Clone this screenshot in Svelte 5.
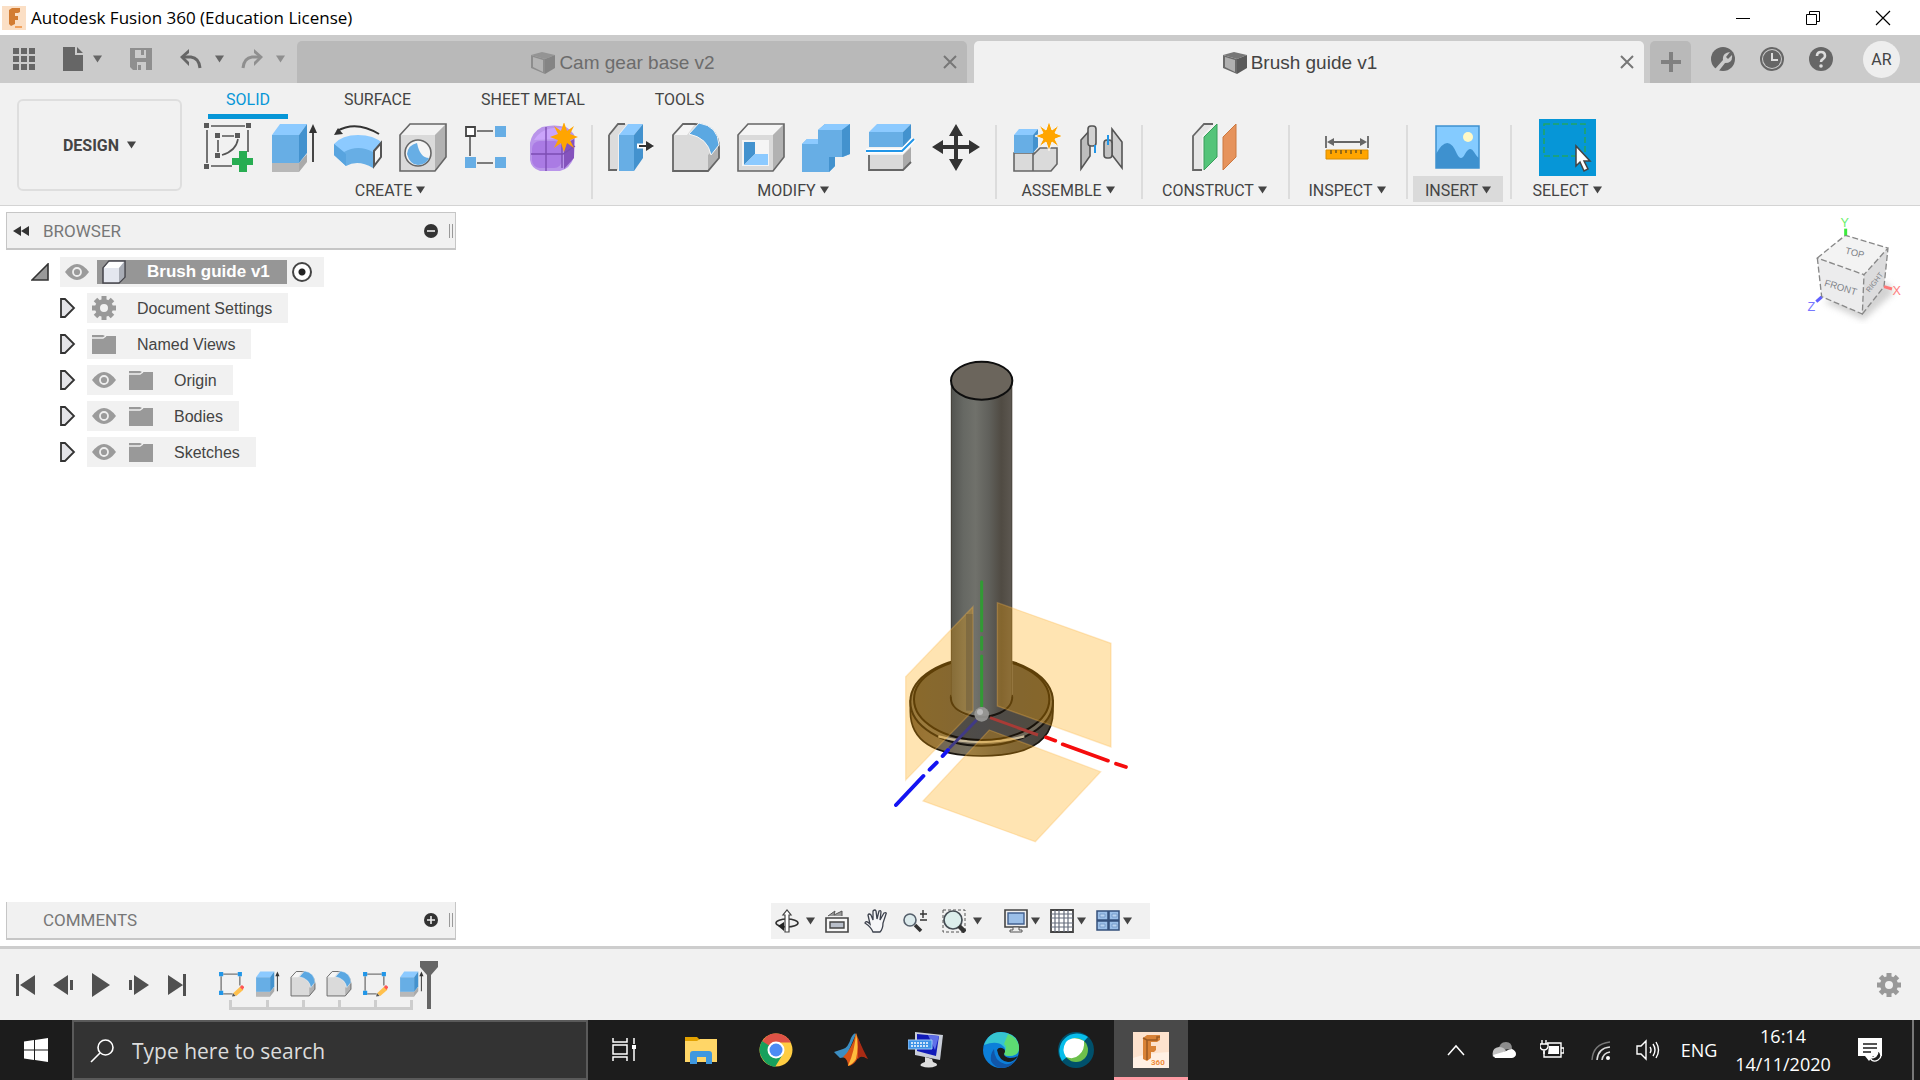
<script>
  const fileTools = ['grid', 'file', 'save', 'undo', 'redo'];
  const tabs = [
    { title: 'Cam gear base v2', active: false },
    { title: 'Brush guide v1', active: true }
  ];
  const modes = ['SOLID', 'SURFACE', 'SHEET METAL', 'TOOLS'];
  const groups = [
    { label: 'CREATE', icons: ['sketch', 'extrude', 'revolve', 'hole', 'pattern', 'form'] },
    { label: 'MODIFY', icons: ['presspull', 'fillet', 'shell', 'combine', 'split', 'move'] },
    { label: 'ASSEMBLE', icons: ['component', 'joint'] },
    { label: 'CONSTRUCT', icons: ['plane'] },
    { label: 'INSPECT', icons: ['measure'] },
    { label: 'INSERT', icons: ['picture'] },
    { label: 'SELECT', icons: ['select'] }
  ];
  const tree = [
    { label: 'Document Settings', icon: 'gear', eye: false },
    { label: 'Named Views', icon: 'folder', eye: false },
    { label: 'Origin', icon: 'folder', eye: true },
    { label: 'Bodies', icon: 'folder', eye: true },
    { label: 'Sketches', icon: 'folder', eye: true }
  ];
  const navTools = [
    { icon: 'orbit', menu: true, wide: true },
    { icon: 'look', menu: false },
    { icon: 'pan', menu: false },
    { icon: 'zoom', menu: false },
    { icon: 'fit', menu: true, wide: true, last: true },
    { icon: 'display', menu: true },
    { icon: 'gridsnap', menu: true },
    { icon: 'views', menu: true }
  ];
  const playback = ['first', 'prev', 'play', 'next', 'last'];
  const features = ['tsketch', 'extrude', 'fillet', 'fillet', 'tsketch', 'extrude'];
  const apps = ['taskview', 'explorer', 'chrome', 'matlab', 'keyboard', 'edge', 'webex', 'fusion'];
  const teeth = [0, 45, 90, 135, 180, 225, 270, 315];
  const star = '0,-15 3,-6 10,-11 6,-3 14,0 6,3 10,11 3,6 0,15 -3,6 -10,11 -6,3 -14,0 -6,-3 -10,-11 -3,-6';
</script>

{#snippet caret()}
  <svg class="caret" viewBox="0 0 10 8" width="9" height="8" aria-hidden="true"><path d="M0 0h10L5 8z" fill="currentColor" /></svg>
{/snippet}

{#snippet ribbonIcon(name, size)}
  <svg viewBox="0 0 50 50" width={size} height={size} aria-hidden="true">
    {#if name === 'sketch'}
      <path d="M8 3h34M45 7v22M4 7v33M8 43h21M19 13h12M15 17v12M35 16q-2 12-16 16" fill="none" stroke="#555" stroke-width="1.6" />
      <path d="M1 0h5v5H1zM43 0h5v5h-5zM1 41h5v5H1zM12 10h5v5h-5zM32 10h5v5h-5zM12 30h5v5h-5z" fill="#5a5a5a" />
      <path d="M36 28h8v7h7v7h-7v7h-8v-7h-7v-7h7z" fill="#28ad52" />
    {:else if name === 'extrude'}
      <path d="M4 40h27l8-9v8l-8 10H4z" fill="#aaa" /><path d="M4 40h27v9H4z" fill="#b8b8b8" />
      <path d="M4 12 12 1h27l-8 11z" fill="#8ccaff" /><path d="M4 12h27v28H4z" fill="#67aee5" /><path d="m31 12 8-11v29l-8 10z" fill="#4392ce" />
      <path d="M45 39V8" stroke="#333" stroke-width="1.8" /><path d="m45 1 4 9h-8z" fill="#333" />
    {:else if name === 'revolve'}
      <path d="M4 8q19-11 42 3" fill="none" stroke="#333" stroke-width="2" /><path d="m1 12 4-7 5 6z" fill="#333" />
      <path d="M1 21q8-9 24-9t24 8l-7 12q-17-9-31 0z" fill="#8ccaff" />
      <path d="M1 21 11 29q14-8 29 0v16q-15-9-27-2L1 32z" fill="#67aee5" />
      <path d="M1 21v11l12 11V31z" fill="#58a4df" />
      <path d="m41 28 7-8v14l-7 9z" fill="#f5f5f5" stroke="#555" stroke-width="2" />
    {:else if name === 'hole'}
      <path d="M2 12 12 1h36v33L37 48H2z" fill="#dadada" /><path d="M2 12 12 1h36L37 12z" fill="#f2f2f2" /><path d="M37 12 48 1v33L37 48z" fill="#b2b2b2" />
      <path d="M2 12 12 1h36v33L37 48H2z" fill="none" stroke="#666" stroke-width="1.6" />
      <circle cx="20" cy="30" r="13" fill="#f5f5f5" stroke="#666" stroke-width="1.6" /><path d="M19 20q3 15 12 15-3 7-11 7T9 31q1-9 10-11z" fill="#67aee5" />
    {:else if name === 'pattern'}
      <path d="M14 8h16M7 14v19M14 40h16" stroke="#555" stroke-width="1.6" /><path d="M3 4h9v9H3z" fill="#fff" stroke="#444" stroke-width="1.8" />
      <path d="M32 3h11v11H32zM32 34h11v11H32zM2 34h11v11H2z" fill="#67aee5" />
    {:else if name === 'form'}
      <path d="M2 20Q4 9 14 4q12-3 24 0 10 6 9 14l-1 16q-4 12-14 14H12Q3 45 2 37z" fill="#b995ea" />
      <path d="m36 22 10-6v19l-10 11z" fill="#8553bd" /><path d="M6 17Q15 3 34 5l-4 11z" fill="#caa4fb" />
      <rect x="4" y="18" width="30" height="27" rx="8" fill="#aa7be4" /><path d="M18 4v44M3 31h32l12-8M34 14v31" fill="none" stroke="#7c4eb3" stroke-width="1.4" />
      <polygon points={star} transform="translate(36 14)" fill="#ffa500" />
    {:else if name === 'presspull'}
      <path d="M3 12 12 1h9L12 12v35H3z" fill="#dcdcdc" /><path d="M3 12 12 1h7M3 12v35h8" fill="none" stroke="#666" stroke-width="1.8" />
      <path d="M13 12 22 1h15l-9 11z" fill="#8ccaff" /><path d="M13 12h15v36H13z" fill="#67aee5" /><path d="m28 12 9-11v34l-9 13z" fill="#4392ce" />
      <path d="M31 23h16" stroke="#fff" stroke-width="5" /><path d="M33 23h10" stroke="#333" stroke-width="2" /><path d="m40 18 8 5-8 5z" fill="#333" />
    {:else if name === 'fillet'}
      <path d="M2 12 12 1h12q24 3 24 24v10L37 48H2z" fill="#dadada" /><path d="M2 12 12 1h12L16 12z" fill="#f5f5f5" /><path d="m37 32 11-10v13L37 48z" fill="#b2b2b2" />
      <path d="M2 12 12 1h12q24 3 24 24v10L37 48H2z" fill="none" stroke="#666" stroke-width="1.8" />
      <path d="M18 11 28 0q19 3 20 22l-8 10Q37 15 18 11z" fill="#5ba8e2" stroke="#f5f5f5" />
    {:else if name === 'shell'}
      <path d="M2 12 12 1h36v33L37 48H2z" fill="#dadada" /><path d="M2 12 12 1h36L37 12z" fill="#f5f5f5" /><path d="M37 12 48 1v33L37 48z" fill="#b2b2b2" />
      <path d="M2 12 12 1h36v33L37 48H2z" fill="none" stroke="#666" stroke-width="1.6" />
      <path d="M6 17h27v26H6z" fill="#f5f5f5" /><path d="M8 19h11v12L8 42z" fill="#4392ce" /><path d="M19 31h13v11H8z" fill="#8ccaff" />
    {:else if name === 'combine'}
      <path d="M1 21 6 16h11V7l7-6h25v30l-7 3h-8v9l-6 6H1z" fill="#67aee5" />
      <path d="m1 21 5-5h11v5zM17 7l7-6h25l-8 6z" fill="#8ccaff" /><path d="m41 7 8-6v30l-8 3zM28 34h6v9l-6 6z" fill="#4392ce" />
    {:else if name === 'split'}
      <path d="m3 9 8-8h34l-8 8z" fill="#8ccaff" /><path d="M3 9h34v15H3z" fill="#67aee5" /><path d="m37 9 8-8v14l-8 9z" fill="#4392ce" />
      <path d="M3 32h34l8-8v15l-8 7H3z" fill="#dadada" /><path d="m37 32 8-8v15l-8 7z" fill="#aaa" />
      <path d="M3 32v15h34l8-8" fill="none" stroke="#666" stroke-width="1.8" />
      <path d="M0 28h36l12-12" fill="none" stroke="#fff" stroke-width="5" /><path d="M0 28h36l12-12" fill="none" stroke="#2196e8" stroke-width="2" />
    {:else if name === 'move'}
      <path d="M25 7v36M7 24h36" stroke="#333" stroke-width="4" /><path d="m25 1 7 12H18zM25 48l-7-12h14zM1 24l11-7v14zM49 24l-11 7V17z" fill="#333" />
    {:else if name === 'component'}
      <path d="m23 31 6-6h17v16l-6 7H3V30h20z" fill="#dadada" stroke="#666" stroke-width="1.6" /><path d="M22 30v18" stroke="#666" stroke-width="1.6" />
      <path d="m3 12 5-6h19l-5 6z" fill="#8ccaff" /><path d="M3 12h19v18H3z" fill="#67aee5" /><path d="m22 12 5-6v18l-5 6z" fill="#4392ce" />
      <polygon points={star} transform="translate(38 13)" fill="#ffa500" stroke="#f5f5f5" stroke-width="1" />
    {:else if name === 'joint'}
      <path d="m5 17 9-10v26L5 46z" fill="#bdbdbd" stroke="#555" stroke-width="1.6" /><rect x="12" y="3" width="8" height="20" rx="3" fill="#d2d2d2" stroke="#555" stroke-width="1.6" />
      <path d="m36 6 10 13v26L36 32z" fill="#cfcfcf" stroke="#555" stroke-width="1.6" /><rect x="28" y="17" width="8" height="18" rx="3" fill="#c2c2c2" stroke="#555" stroke-width="1.6" />
      <path d="M19 22v8M32 12v10" stroke="#2196e8" stroke-width="2" />
    {:else if name === 'plane'}
      <path d="M3 13 14 1h9L12 13v34H3z" fill="#e6e6e6" /><path d="M12 47H3V13L14 1h9" fill="none" stroke="#666" stroke-width="1.8" />
      <path d="M14 14 27 1v33L14 47z" fill="#54c479" stroke="#389e5b" /><path d="M33 14 46 1v33L33 47z" fill="#e6935c" stroke="#cc7840" />
    {:else if name === 'measure'}
      <path d="M4 13v12M46 13v12M8 19h34" stroke="#666" stroke-width="1.8" /><path d="m5 19 7-4v8zM45 19l-7-4v8z" fill="#666" />
      <path d="M4 27h42v9H4z" fill="#ffa500" stroke="#d98c00" /><path d="M9 27v4M14 27v3M19 27v4M24 27v3M29 27v4M34 27v3M39 27v4" stroke="#6b5320" stroke-width="1.4" />
    {:else if name === 'picture'}
      <path d="M3 3h43v42H3z" fill="#84cbff" stroke="#3e91cf" stroke-width="1.5" /><circle cx="35" cy="14" r="5" fill="#fff9c6" />
      <path d="M3 31q12-22 21 0 4 8 8 0 5-9 9-2 3 5 5 6v10H3z" fill="#3e91cf" />
    {:else if name === 'tsketch'}
      <path d="M10 6h28M6 10v28M42 10v18M10 44h18" stroke="#777" stroke-width="2.6" /><path d="M2 2h8v8H2zM38 2h8v8h-8zM2 38h8v8H2z" fill="#2196e8" />
      <path d="m29 43 14-13 6 6-14 12z" fill="#ffc04d" /><path d="m42 31 4-4 5 4-4 5z" fill="#f55" /><path d="m27 49 2-6 5 5z" fill="#555" />
    {/if}
  </svg>
{/snippet}

{#snippet small(name)}
  <svg viewBox="0 0 24 24" width="24" height="24" aria-hidden="true">
    {#if name === 'grid'}
      <path d="M1 1h6v6H1zM9 1h6v6H9zM17 1h6v6h-6zM1 9h6v6H1zM9 9h6v6H9zM17 9h6v6h-6zM1 17h6v6H1zM9 17h6v6H9zM17 17h6v6h-6z" fill="#666" />
    {:else if name === 'file'}
      <path d="M2 0h12v8h8v16H2zM16 0l6 6h-6z" fill="#666" />
    {:else if name === 'save'}
      <path d="M1 1h22v22H4l-3-3z" fill="#8f8f8f" /><path d="M6 3h11v8H6zM8 15h9v8H8z" fill="#cbcbcb" /><path d="M12 3h3v5h-3zM9 18h3v5H9z" fill="#8f8f8f" />
    {:else if name === 'undo'}
      <path d="M5 10h7q8 1 9 11" fill="none" stroke="#666" stroke-width="3" /><path d="M10 2v4l-5 4 5 5v4L1 10z" fill="#666" />
    {:else if name === 'redo'}
      <path d="M19 10h-7q-8 1-9 11" fill="none" stroke="#8f8f8f" stroke-width="3" /><path d="M14 2v4l5 4-5 5v4l9-9z" fill="#8f8f8f" />
    {:else if name === 'wrench'}
      <circle cx="12" cy="12" r="12" fill="#666" /><path d="m4 22 8-9q-1-7 7-8l-4 5 2 2 4-4q1 8-7 8l-7 9" fill="#cbcbcb" />
    {:else if name === 'clock'}
      <circle cx="12" cy="12" r="11" fill="#cbcbcb" stroke="#666" stroke-width="2" /><circle cx="12" cy="12" r="9" fill="#666" /><path d="M12 6v7h6" fill="none" stroke="#ddd" stroke-width="2" />
    {:else if name === 'help'}
      <circle cx="12" cy="12" r="12" fill="#666" /><path d="M8 9q0-4 4-4t4 4q0 2-2 3t-2 3" fill="none" stroke="#ddd" stroke-width="2.6" /><circle cx="12" cy="19" r="1.8" fill="#ddd" />
    {:else if name === 'gear'}
      {#each teeth as a}<rect x="9.5" y="0" width="5" height="7" fill="#999" transform="rotate({a} 12 12)" />{/each}
      <circle cx="12" cy="12" r="6.5" fill="none" stroke="#999" stroke-width="5" />
    {:else if name === 'folder'}
      <path d="M0 3h11l2 1h11v18H0z" fill="#999" /><path d="M0 6h11l3-2" fill="none" stroke="#f1f1f1" stroke-width="1.4" />
    {:else if name === 'eye'}
      <path d="M0 12Q6 4 12 4t12 8q-6 8-12 8T0 12z" fill="#9b9b9b" /><circle cx="12" cy="12" r="4" fill="none" stroke="#eee" stroke-width="1.8" />
    {:else if name === 'cube'}
      <path d="M1 8 7 1h16v16l-6 6H1z" fill="#e4e7ef" stroke="#4a4a50" stroke-width="1.6" /><path d="M2 8 7 2h15l-5 6z" fill="#fff" /><path d="m17 8 5-6v15l-5 5z" fill="#a9adb6" />
    {:else if name === 'orbit'}
      <ellipse cx="12" cy="14" rx="11" ry="4" fill="none" stroke="#333" stroke-width="1.6" /><path d="M10 23V6H8l4-5 4 5h-2v17z" fill="#fff" stroke="#444" stroke-width="1.2" /><path d="m3 17 6-4v9z" fill="#222" />
    {:else if name === 'look'}
      <path d="M1 9h22v14H1z" fill="#f7f7f7" stroke="#444" stroke-width="1.6" /><path d="M5 13h14v6H5z" fill="#b9bfca" stroke="#444" stroke-width="1.4" /><path d="m3 7 7-5-1 4 8-4v5" fill="#999" stroke="#555" />
    {:else if name === 'pan'}
      <path d="M9 23q-2-5-8-9 1-3 5 1L4 6q1-2 3 0l2 5V2q2-2 3 0l1 8 2-8q2-1 2 1l-1 8 4-7q3-1 2 1l-3 9q0 6-3 9z" fill="#f6f6f8" stroke="#3c414c" stroke-width="1.3" />
    {:else if name === 'zoom'}
      <circle cx="7" cy="11" r="6" fill="#dceaec" stroke="#56606c" stroke-width="1.6" /><path d="m12 16 6 6" stroke="#333" stroke-width="3.5" /><path d="M17 5h7M20 1v8M17 11h7" stroke="#333" stroke-width="1.4" />
    {:else if name === 'fit'}
      <path d="M1 1h22v22H1z" fill="none" stroke="#555" stroke-dasharray="3 2" /><circle cx="11" cy="11" r="9" fill="#dceeec" stroke="#454d54" stroke-width="1.7" /><path d="m17 17 6 6" stroke="#333" stroke-width="4.5" />
    {:else if name === 'display'}
      <path d="M1 1h22v17H1z" fill="#eee" stroke="#444" stroke-width="1.6" /><path d="M4 4h16v11H4z" fill="#9bbfe8" stroke="#41608f" stroke-width="1.4" /><path d="M9 18h6v3h3v2H6v-2h3z" fill="#eee" stroke="#555" />
    {:else if name === 'gridsnap'}
      <path d="M1 1h22v22H1z" fill="#fff" stroke="#444" stroke-width="1.8" /><path d="M5 1v22M9 1v22M14 1v22M18 1v22M1 5h22M1 9h22M1 14h22M1 18h22" stroke="#656d7c" stroke-width="1.2" />
    {:else if name === 'views'}
      <path d="M1 2h11v9H1zM13 2h10v9H13zM1 12h11v9H1zM13 12h10v9H13z" fill="#9bbfe8" stroke="#34507b" stroke-width="1.5" /><path d="M4 5h5v3H4zM16 5h5v3h-5zM4 15h5v3H4zM16 15h5v3h-5z" fill="#b9d4f2" stroke="#6f94c4" stroke-width=".8" />
    {:else if name === 'first'}
      <path d="M3 1h3v22H3zM22 2v20L7 12z" fill="#505050" />
    {:else if name === 'prev'}
      <path d="M17 2v20L2 12zM19 7h3v10h-3z" fill="#505050" />
    {:else if name === 'play'}
      <path d="M3 0v24l18-12z" fill="#505050" />
    {:else if name === 'next'}
      <path d="M7 2v20l15-10zM2 7h3v10H2z" fill="#505050" />
    {:else if name === 'last'}
      <path d="M18 1h3v22h-3zM3 2v20l15-10z" fill="#505050" />
    {:else if name === 'tray-up'}
      <path d="m4 17 8-9 8 9" fill="none" stroke="#fff" stroke-width="1.5" />
    {:else if name === 'tray-cloud'}
      <path d="M7 12q0-8 7-8 6 0 6 7z" fill="#8c8c8c" /><path d="M1 19q-2-9 6-10 5 0 7 4z" fill="#c2c2c2" /><path d="M3 20h17q4-1 4-4t-4-5q-3 0-6 2-6 2-13 4z" fill="#fff" />
    {:else if name === 'tray-battery'}
      <path d="M7 5h14v14H4v-6M21 10h3v5h-3" fill="none" stroke="#fff" stroke-width="1.4" /><path d="M9 8h10v8H8z" fill="#fff" /><path d="M2 2v4M6 2v4M0 6h8v3q-1 3-4 3T0 9zM4 12v4" fill="#1c1c1c" stroke="#fff" stroke-width="1.4" />
    {:else if name === 'tray-wifi'}
      <path d="M4 22Q5 6 22 4" fill="none" stroke="#777" stroke-width="1.4" /><path d="M9 22q1-12 13-13M14 22q1-7 8-8" fill="none" stroke="#ddd" stroke-width="1.6" /><circle cx="20" cy="20" r="2" fill="#fff" />
    {:else if name === 'tray-sound'}
      <path d="M1 8v8h4l5 5V3L5 8zM14 9q2 3 0 6M17 6q4 6 0 12M20 4q5 8 0 16" fill="none" stroke="#fff" stroke-width="1.4" />
    {:else if name === 'tray-note'}
      <path d="M0 0h24v18H15l-4 5-4-5H0z" fill="#fff" /><path d="M5 6h14M5 10h14M5 14h8" stroke="#1c1c1c" stroke-width="1.4" /><path d="M20 12q6 6 0 10-5 3-8-2 8 0 8-8z" fill="#1c1c1c" stroke="#fff" stroke-width="1.4" />
    {/if}
  </svg>
{/snippet}

{#snippet appIcon(name)}
  <svg viewBox="0 0 36 36" width="36" height="36" aria-hidden="true">
    {#if name === 'taskview'}
      <path d="M7 6v4h14V6M7 29v-4h14v4M7 13h14v9H7zM28 6v6M28 17v12" fill="none" stroke="#fff" stroke-width="1.5" /><path d="M26 13h4v4h-4z" fill="#fff" />
    {:else if name === 'explorer'}
      <path d="M2 5h12l3 3v5H2z" fill="#e2a100" /><path d="M2 9h12l3-2h17v23H2z" fill="#ffd667" /><path d="M7 32V22q0-3 3-3h16q3 0 3 3v10h-6v-7h-9v7z" fill="#3f98df" />
    {:else if name === 'chrome'}
      <circle cx="18" cy="18" r="16.5" fill="#ffcd42" /><path d="M18 18 4 10Q9 1 18 1.500q10 0 15 9H18z" fill="#de5246" /><path d="M18 18 4 9q-5 9 0 17 5 8 13 9l8-13z" fill="#17a05d" />
      <circle cx="18" cy="18" r="8.500" fill="#fff" /><circle cx="18" cy="18" r="6.500" fill="#4c8bf5" />
    {:else if name === 'matlab'}
      <path d="m1 20 9-3q5-1 8-11 3-6 5-4L13 25l-6 1z" fill="#3c8ec2" /><path d="M23 1q3 8 6 16 3 8 6 10-7-5-10-1-5 8-10 8 0-7-5-9Q19 17 23 1z" fill="#d85316" /><path d="M23 1q-1 17-8 33 5-2 8-7 3-12 0-26z" fill="#ffbd3d" /><path d="M25 6q6 14 10 21-7-5-10 0z" fill="#a92b14" />
    {:else if name === 'keyboard'}
      <path d="m7 0 28 3-3 25-25-5z" fill="#c8cdd8" /><path d="m9 2 22 2-3 20-19-5z" fill="#101ab8" /><path d="m20 3 11 1-4 14z" fill="#6070e8" /><path d="m17 25 7 2 1 3q6 2 3 4-7 3-15 0-2-2 4-4z" fill="#ddd" /><path d="M0 8h24v9H0z" fill="#3e93e6" stroke="#9cc8f5" /><path d="M3 11h18M3 14h18" stroke="#fff" stroke-width="1.6" stroke-dasharray="2 1" />
    {:else if name === 'edge'}
      <circle cx="18" cy="18" r="18" fill="#0c7fd9" /><path d="M1 13Q6 0 18 0q17 1 18 15 0 9-10 9-5 0-5-3 3-4-1-7-6-6-19-1z" fill="#36c5d0" /><path d="M25 2q11 5 11 14 0 8-10 8-5 0-5-3 4-6 0-9z" fill="#5ddc72" /><path d="M11 17q0 12 11 15 7 1 12-6-5 10-16 10-7-1-10-7-1-7 3-12z" fill="#1156a8" /><path d="M14 18q2-4 7-1 2 2 0 5 0 3 6 4 5 0 8-2-4 6-10 6-9-1-11-12z" fill="#1c1c1c" />
    {:else if name === 'webex'}
      <circle cx="18" cy="18" r="18" fill="#00506b" /><path d="M4 29A18 18 0 0 1 30 5L18 18z" fill="#07bdea" /><circle cx="18" cy="18" r="12" fill="#6dc04b" /><path d="M8 25Q3 18 8 10q7-7 18-1 1 9-5 14-5 5-13 2z" fill="#fff" />
    {:else if name === 'fusion'}
      <path d="M0 0h36v36H0z" fill="#fde2cd" /><path d="M0 26q14-5 36-6v16H0z" fill="#fff0e4" /><path d="m10 6 4-3h13v5l-3 2h-6v4h5v4l-2 2h-3v6l-4 3-4-2z" fill="#d98236" /><path d="m10 6 4 2h10v-3h3M14 8v20" fill="none" stroke="#9c5a22" stroke-width="1.5" />
      <text x="18" y="33" font-size="8" fill="#ef8c3a" font-family="Roboto, sans-serif" font-weight="700">360</text>
    {/if}
  </svg>
{/snippet}

<div class="app">
  <header class="title">
    <svg viewBox="0 0 24 24" width="24" height="24" aria-hidden="true"><path d="M0 0h24v24H0z" fill="#fbdfc5" /><path d="m7 4 3-2h8v4l-2 1h-3v3h3v4h-3v4l-4 2-2-2z" fill="#d27c33" /><path d="M13 20h7v2h-7z" fill="#f0a25e" /></svg>
    <h1>Autodesk Fusion 360 (Education License)</h1>
    <div class="winbtns">
      <button aria-label="Minimize"><svg viewBox="0 0 16 16" width="16" height="16"><path d="M1 8.500h14" stroke="#000" /></svg></button>
      <button aria-label="Restore"><svg viewBox="0 0 16 16" width="16" height="16"><path d="M1.500 4.500h10v10h-10zM4.500 4V1.500h10v10H12" fill="none" stroke="#000" /></svg></button>
      <button aria-label="Close"><svg viewBox="0 0 16 16" width="16" height="16"><path d="m1 1 14 14M15 1 1 15" stroke="#000" stroke-width="1.2" /></svg></button>
    </div>
  </header>

  <div class="tabbar">
    <div class="filetools">
      {#each fileTools as t}
        <button class="ft {t}" aria-label={t}>
          {@render small(t)}
          {#if t === 'file' || t === 'undo' || t === 'redo'}{@render caret()}{/if}
        </button>
      {/each}
    </div>
    <div class="tabs">
      {#each tabs as t}
        <div class="tab" class:active={t.active}>
          <button class="tabname">
            <svg viewBox="0 0 24 24" width="24" height="24" aria-hidden="true"><path d="M0 4 11 1l13 3-10 4z" fill="#777" /><path d="m0 4 14 4v15L0 17z" fill="#6a6a6a" /><path d="m2 6 10 3v12L2 16z" fill="#b0b0b0" /><path d="m14 8 10-4v13l-10 6z" fill="#5a5a5a" /></svg>
            {t.title}
          </button>
          <button class="tabclose" aria-label="Close tab"><svg viewBox="0 0 14 14" width="14" height="14"><path d="m1 1 12 12M13 1 1 13" stroke="#777" stroke-width="2" /></svg></button>
        </div>
      {/each}
    </div>
    <button class="plus" aria-label="New tab"><svg viewBox="0 0 20 20" width="20" height="20"><path d="M10 0v20M0 10h20" stroke="#808080" stroke-width="4" /></svg></button>
    <div class="account">
      <button aria-label="Extensions">{@render small('wrench')}</button>
      <button aria-label="Job status">{@render small('clock')}</button>
      <button aria-label="Help">{@render small('help')}</button>
      <button class="avatar">AR</button>
    </div>
  </div>

  <div class="ribbon">
    <button class="design">DESIGN {@render caret()}</button>
    <div class="ribbonmain">
      <nav class="modes">
        {#each modes as m, i}<button class:on={i === 0}>{m}</button>{/each}
      </nav>
      <div class="groups">
        {#each groups as g}
          <section class="group">
            <div class="icons">
              {#each g.icons as ic}
                <button class="tool" aria-label={ic}>
                  {#if ic === 'select'}
                    <svg viewBox="0 0 57 57" width="57" height="57" aria-hidden="true"><path d="M0 0h57v57H0z" fill="#0696d7" /><path d="M5 5h41v32H5z" fill="none" stroke="#22a566" stroke-width="1.600" stroke-dasharray="6 3" /><path d="M37 27v20l4-4 4 9 4-2-4-8h6z" fill="#fff" stroke="#444" stroke-width="1.500" /></svg>
                  {:else}
                    {@render ribbonIcon(ic, 50)}
                  {/if}
                </button>
              {/each}
            </div>
            <button class="glabel" class:hot={g.label === 'INSERT'}>{g.label} {@render caret()}</button>
          </section>
        {/each}
      </div>
    </div>
  </div>

  <main class="view">
    <svg class="model" viewBox="0 0 900 1560" width="300" height="520" role="img" aria-label="Brush guide model">
      <defs>
        <linearGradient id="rod"><stop offset="0" stop-color="#52534f" /><stop offset=".2" stop-color="#666863" /><stop offset=".4" stop-color="#70716b" /><stop offset=".62" stop-color="#60605b" /><stop offset=".82" stop-color="#504b43" /><stop offset=".97" stop-color="#5b564f" /><stop offset="1" stop-color="#aaa69e" /></linearGradient>
        <linearGradient id="disc"><stop offset="0" stop-color="#57503f" /><stop offset=".5" stop-color="#4d4b4a" /><stop offset="1" stop-color="#524b3d" /></linearGradient>
        <linearGradient id="rim"><stop offset="0" stop-color="#6a5a45" /><stop offset=".4" stop-color="#77705f" /><stop offset=".7" stop-color="#514f4b" /><stop offset="1" stop-color="#464037" /></linearGradient>
      </defs>
      <path d="M151 1082v32q0 134 214 134t214-134v-32z" fill="url(#rim)" stroke="#19150f" stroke-width="5" />
      <ellipse cx="365" cy="1085" rx="214" ry="132" fill="#6f6758" stroke="#19150f" stroke-width="6" />
      <path d="M235 1189q130 34 258 0" fill="none" stroke="#c8b999" stroke-width="7" />
      <ellipse cx="365" cy="1078" rx="203" ry="122" fill="url(#disc)" stroke="#19130a" stroke-width="6" />
      <path d="M273 124h184v949q-7 60-92 60t-92-60z" fill="url(#rod)" />
      <path d="M273 1065q-5 38 42 56 50 22 104-2 42-20 37-54" fill="none" stroke="#191510" stroke-width="6" />
      <path d="M274 130v940M455 130v940" stroke="#45423a" stroke-width="3" />
      <ellipse cx="365" cy="122" rx="92" ry="57" fill="#6b655c" stroke="#0e0e0e" stroke-width="6" />
      <g fill="#ffa500" fill-opacity=".3" stroke="#fbb84e" stroke-opacity=".3" stroke-width="4">
        <path d="m137 1010 202-210v312L137 1320z" />
        <path d="m412 788 341 122v311L412 1098z" />
        <path d="m388 1170 334 125-196 210-337-122z" />
      </g>
      <path d="M318 822h20v290h-20z" fill="#6a5a3c" opacity=".5" />
      <path d="M365 725v147M365 892v36M365 948v150" stroke="#329a35" stroke-width="9" stroke-linecap="round" />
      <path d="m390 1133 144 52" stroke="#a83b36" stroke-width="9" />
      <path d="m558 1192 28 10M608 1213l136 49M768 1271l30 10" stroke="#f50c0c" stroke-width="11" stroke-linecap="round" />
      <path d="M350 1140 268 1225" stroke="#403a86" stroke-width="9" /><path d="m264 1230-16 18M230 1268l-21 21M190 1308l-82 87" stroke="#1414f2" stroke-width="12" stroke-linecap="round" />
      <circle cx="365" cy="1123" r="22" fill="#9a9a98" opacity=".9" /><circle cx="360" cy="1116" r="9" fill="#bbb" />
    </svg>

    <aside class="browser">
      <div class="panelhead">
        <button aria-label="Collapse"><svg viewBox="0 0 16 10" width="16" height="10"><path d="M8 0v10L0 5zM16 0v10L8 5z" fill="#333" /></svg></button>
        <h2>BROWSER</h2>
        <button aria-label="Minimize panel"><svg viewBox="0 0 14 14" width="14" height="14"><circle cx="7" cy="7" r="7" fill="#333" /><path d="M3 7h8" stroke="#eee" stroke-width="1.600" /></svg></button>
        <span class="grip"></span>
      </div>
      <ul class="tree">
        <li class="root">
          <button class="arrow" aria-label="Collapse root"><svg viewBox="0 0 18 18" width="18" height="18"><path d="M1 17 17 1v16z" fill="#999" stroke="#333" stroke-width="1.600" /></svg></button>
          <div class="rowbox">
            {@render small('eye')}
            <span class="sel">{@render small('cube')}<b>Brush guide v1</b></span>
            <input type="radio" checked aria-label="Activate component" />
          </div>
        </li>
        {#each tree as n}
          <li>
            <button class="arrow" aria-label="Expand {n.label}"><svg viewBox="0 0 16 20" width="16" height="20"><path d="M1 1h4l9 9-9 9H1z" fill="#e4e4e8" stroke="#333" stroke-width="1.800" /></svg></button>
            <div class="rowbox">
              {#if n.eye}{@render small('eye')}{/if}
              {@render small(n.icon)}
              <span class="name">{n.label}</span>
            </div>
          </li>
        {/each}
      </ul>
    </aside>

    <svg class="viewcube" viewBox="0 0 480 420" width="160" height="140" role="img" aria-label="View cube">
      <defs><filter id="soft"><feGaussianBlur stdDeviation="10" /></filter></defs>
      <path d="m190 305 120 55 92-82-20-30z" fill="#bbb" opacity=".65" filter="url(#soft)" />
      <path d="m172 174 84-68 128 38-72 80z" fill="#f3f3f3" /><path d="m172 174 140 50-5 118-122-52z" fill="#ececed" /><path d="m312 224 72-80-12 116-65 82z" fill="#dcdcdd" />
      <path d="m172 174 84-68 128 38-72 80zM172 174l13 116 122 52 5-118M307 342l65-82 12-116" fill="none" stroke="#888" stroke-width="4" stroke-dasharray="18 8" />
      <path d="M257 86v20" stroke="#3bea3b" stroke-width="9" /><path d="m185 291-16 14" stroke="#6060ff" stroke-width="9" /><path d="m372 260 24 7" stroke="#ff7777" stroke-width="9" />
      <g font-family="Liberation Sans, sans-serif" text-anchor="middle">
        <text x="254" y="80" font-size="38" fill="#6cf06c">Y</text><text x="154" y="332" font-size="38" fill="#7777ff">Z</text><text x="410" y="285" font-size="38" fill="#ff8080">X</text>
        <text x="284" y="168" font-size="28" fill="#808389" transform="rotate(14 284 160)">TOP</text>
        <text x="242" y="272" font-size="29" fill="#808389" transform="rotate(17 242 262)">FRONT</text>
        <text x="344" y="254" font-size="22" fill="#808389" transform="rotate(-52 344 247)">RIGHT</text>
      </g>
    </svg>

    <div class="panelhead comments">
      <h2>COMMENTS</h2>
      <button aria-label="Add comment"><svg viewBox="0 0 14 14" width="14" height="14"><circle cx="7" cy="7" r="7" fill="#333" /><path d="M3 7h8M7 3v8" stroke="#eee" stroke-width="1.600" /></svg></button>
      <span class="grip"></span>
    </div>

    <div class="navbar">
      {#each navTools as n}
        <button class:last={n.last} class:menu={n.menu} class:wide={n.wide} aria-label={n.icon}>{@render small(n.icon)}{#if n.menu}{@render caret()}{/if}</button>
      {/each}
    </div>
  </main>

  <div class="timeline">
    <div class="playback">{#each playback as p}<button aria-label={p}>{@render small(p)}</button>{/each}</div>
    <div class="history">
      {#each features as f}<button aria-label={f}>{@render ribbonIcon(f, 26)}<i></i></button>{/each}
    </div>
    <svg class="marker" viewBox="0 0 18 48" width="18" height="48" aria-hidden="true"><path d="M0 0h18v6l-7 8v34H7V14L0 6z" fill="#666" /></svg>
    <button class="settings" aria-label="Timeline settings">{@render small('gear')}</button>
  </div>

  <footer class="taskbar">
    <button class="start" aria-label="Start"><svg viewBox="0 0 24 24" width="24" height="24"><path d="M0 3.500 10 2v9.500H0zM11 2l13-2v11.500H11zM0 12.500h10V22L0 20.500zM11 12.500h13V24l-13-2z" fill="#fff" /></svg></button>
    <label class="search">
      <svg viewBox="0 0 24 24" width="24" height="24" aria-hidden="true"><circle cx="15.500" cy="8.500" r="7.500" fill="none" stroke="#fff" stroke-width="1.600" /><path d="m10 14-9 9" stroke="#fff" stroke-width="1.600" /></svg>
      <input type="text" placeholder="Type here to search" aria-label="Search" />
    </label>
    <div class="apps">
      {#each apps as a}<button class:current={a === 'fusion'} aria-label={a}>{@render appIcon(a)}</button>{/each}
    </div>
    <div class="tray">
      {#each ['tray-up', 'tray-cloud', 'tray-battery', 'tray-wifi', 'tray-sound'] as t}<button aria-label={t}>{@render small(t)}</button>{/each}
      <button class="lang">ENG</button>
      <button class="clock"><span>16:14</span><span>14/11/2020</span></button>
      <button class="note" aria-label="Notifications">{@render small('tray-note')}</button>
    </div>
  </footer>
</div>

<style>
  :global(body) { background: #fff; }
  .app { display: flex; flex-direction: column; min-height: 100vh; font-family: Roboto, 'Liberation Sans', sans-serif; font-size: 16px; color: #444; }
  button { border: 0; padding: 0; margin: 0; background: none; font: inherit; color: inherit; display: flex; align-items: center; justify-content: center; }
  svg { display: block; flex: none; }
  h1, h2, ul { margin: 0; padding: 0; font-weight: 400; }

  .title { display: flex; align-items: center; height: 35px; padding-left: 2px; background: #fff; }
  .title h1 { flex: 1; padding-left: 5px; font: 17px/24px 'Open Sans', sans-serif; color: #000; }
  .winbtns { display: flex; align-self: stretch; padding-right: 2px; }
  .winbtns button { width: 70px; }

  .tabbar { display: flex; height: 48px; background: #cbcbcb; }
  .filetools { width: 297px; display: flex; align-items: center; box-sizing: border-box; padding-left: 12px; color: #666; }
  .ft { gap: 8px; }
  .ft.file { margin-left: 25px; }
  .ft.save { margin-left: 27px; }
  .ft.undo { margin-left: 26px; gap: 12px; }
  .ft.redo { margin-left: 16px; gap: 12px; color: #8f8f8f; }
  .tabs { flex: 1; display: flex; gap: 7px; padding-top: 6px; }
  .tab { flex: 1; display: flex; background: #b9b9b9; border-radius: 5px 5px 0 0; color: #6c6c6c; }
  .tab.active { background: #f1f1f1; color: #444; }
  .tabname { flex: 1; gap: 4px; padding: 2px 0 0 16px; font: 19px/24px 'Liberation Sans', sans-serif; }
  .tab:not(.active) .tabname svg { opacity: .55; }
  .tabclose { width: 34px; }
  .plus { width: 41px; margin: 6px 0 0 6px; background: #b9b9b9; border-radius: 5px 5px 0 0; }
  .account { display: flex; align-items: center; gap: 25px; padding: 0 20px; }
  .avatar { width: 37px; height: 37px; border-radius: 50%; background: #eee; margin-left: 5px; }

  .ribbon { display: flex; height: 122px; background: #f1f1f1; border-bottom: 1px solid #d4d4d4; }
  .design { width: 165px; height: 92px; margin: 16px 7px 0 17px; box-sizing: border-box; border: 2px solid #dedede; border-radius: 6px; gap: 8px; font-weight: 700; }
  .ribbonmain { flex: 1; }
  .modes { display: flex; height: 36px; padding-left: 19px; gap: 34px; box-sizing: border-box; }
  .modes button { padding: 3px 18px 0; border-bottom: 5px solid transparent; line-height: 24px; }
  .modes button.on { color: #0696d7; border-color: #0696d7; }
  .modes button.on + button { margin-left: 4px; }
  .groups { display: grid; grid-template-columns: 402px 404px 146px 147px 118px 104px 114px; }
  .group { display: flex; flex-direction: column; align-items: center; height: 86px; }
  .group + .group { background: linear-gradient(#dcdcdc, #dcdcdc) left 6px / 2px 74px no-repeat; }
  .icons { display: flex; height: 57px; }
  .tool { width: 65px; }
  .glabel { gap: 4px; padding: 2px 12px 0; height: 26px; box-sizing: border-box; }
  .glabel.hot { background: #dadada; }
  .caret { color: #444; }
  .filetools .caret { color: inherit; }

  .view { flex: 1; display: grid; background: #fff; }
  .view > * { grid-area: 1 / 1; }
  .model { place-self: center; margin: 48px 0 0 100px; }
  .browser { place-self: start; width: 450px; margin: 6px 0 0 6px; }
  .panelhead { display: flex; align-items: center; height: 38px; box-sizing: border-box; border: 1px solid #c6c6c6; border-bottom-width: 2px; background: #f1f1f1; padding: 0 2px 0 6px; }
  .panelhead h2 { flex: 1; font-size: 17px; line-height: 24px; padding-left: 14px; color: #777; }
  .grip { width: 2px; height: 14px; border: 1px solid #999; border-width: 0 1px; margin-left: 11px; }
  .comments { place-self: end start; width: 450px; margin: 0 0 6px 6px; border-top: 0; }
  .comments h2 { padding-left: 30px; }
  .tree { list-style: none; padding-top: 7px; display: grid; gap: 6px; font: 16px/30px 'Liberation Sans', sans-serif; }
  .tree li { display: flex; height: 30px; padding-left: 54px; }
  .tree li.root { padding-left: 25px; }
  .arrow { width: 16px; margin-right: 11px; }
  .root .arrow { width: 18px; margin-right: 11px; }
  .rowbox { display: flex; align-items: center; gap: 13px; background: #f1f1f1; padding: 0 16px 0 5px; }
  .name { padding: 1px 0 0 8px; }
  .root .rowbox { padding: 0 12px 0 5px; gap: 5px; }
  .sel { display: flex; align-items: center; gap: 21px; height: 24px; background: #969696; color: #fff; padding: 0 17px 0 5px; margin-left: 3px; }
  .sel b { font-size: 17px; }
  input[type='radio'] { appearance: none; width: 20px; height: 20px; margin: 0; border: 2px solid #444; border-radius: 50%; background: radial-gradient(circle, #222 3px, #fff 4px); }
  .viewcube { place-self: start end; margin-top: -6px; }
  .navbar { place-self: end center; display: flex; align-items: center; height: 36px; margin-bottom: 7px; padding: 0 18px 0 4px; gap: 10px; background: #f1f1f1; }
  .navbar button { margin-right: 5px; }
  .navbar .menu { gap: 3px; margin-right: 0; }
  .navbar .wide { gap: 7px; }
  .navbar .last { margin-right: 12px; }

  .timeline { display: flex; align-items: center; height: 71px; border-top: 3px solid #cdcdcd; background: #f1f1f1; padding: 0 19px 0 13px; }
  .playback { display: flex; gap: 14px; }
  .history { display: flex; margin: 11px 0 0 24px; }
  .history button { width: 36px; flex-direction: column; gap: 3px; }
  .history i { width: 36px; height: 10px; box-sizing: border-box; border-bottom: 3px solid #cdcdcd; background: linear-gradient(#cdcdcd, #cdcdcd) center / 3px 10px no-repeat; }
  .history button:first-child i { width: 20px; align-self: flex-end; background-position: left; }
  .history button:last-child i { width: 20px; align-self: flex-start; background-position: right; }
  .marker { margin-left: -9px; }
  .settings { margin-left: auto; }

  .taskbar { display: flex; height: 60px; background: #1c1c1c; color: #fff; font: 18px/28px 'Open Sans', sans-serif; }
  .start { width: 72px; }
  .search { width: 516px; box-sizing: border-box; border: 2px solid #5a5a5a; background: #333; display: flex; align-items: center; gap: 18px; padding: 2px 0 0 16px; }
  .search input { flex: 1; min-width: 0; border: 0; padding: 0; background: none; font: 21px/28px 'Open Sans', sans-serif; color: #fff; outline: 0; }
  .search input::placeholder { color: #dcdcdc; opacity: 1; }
  .apps { display: flex; gap: 1px; }
  .apps button { width: 74px; height: 60px; box-sizing: border-box; }
  .apps button:first-child { width: 75px; padding-right: 3px; }
  .apps .current { background: #494949; border-bottom: 3px solid #ff9ba4; padding-top: 3px; }
  .tray { margin-left: auto; display: flex; align-items: center; }
  .tray button { width: 48px; }
  .tray .lang { width: 54px; }
  .tray .clock { width: 114px; flex-direction: column; }
  .tray .note { width: 60px; height: 60px; margin: 0 6px 0 0; padding-right: 12px; box-sizing: content-box; border-right: 2px solid #777; }
</style>
